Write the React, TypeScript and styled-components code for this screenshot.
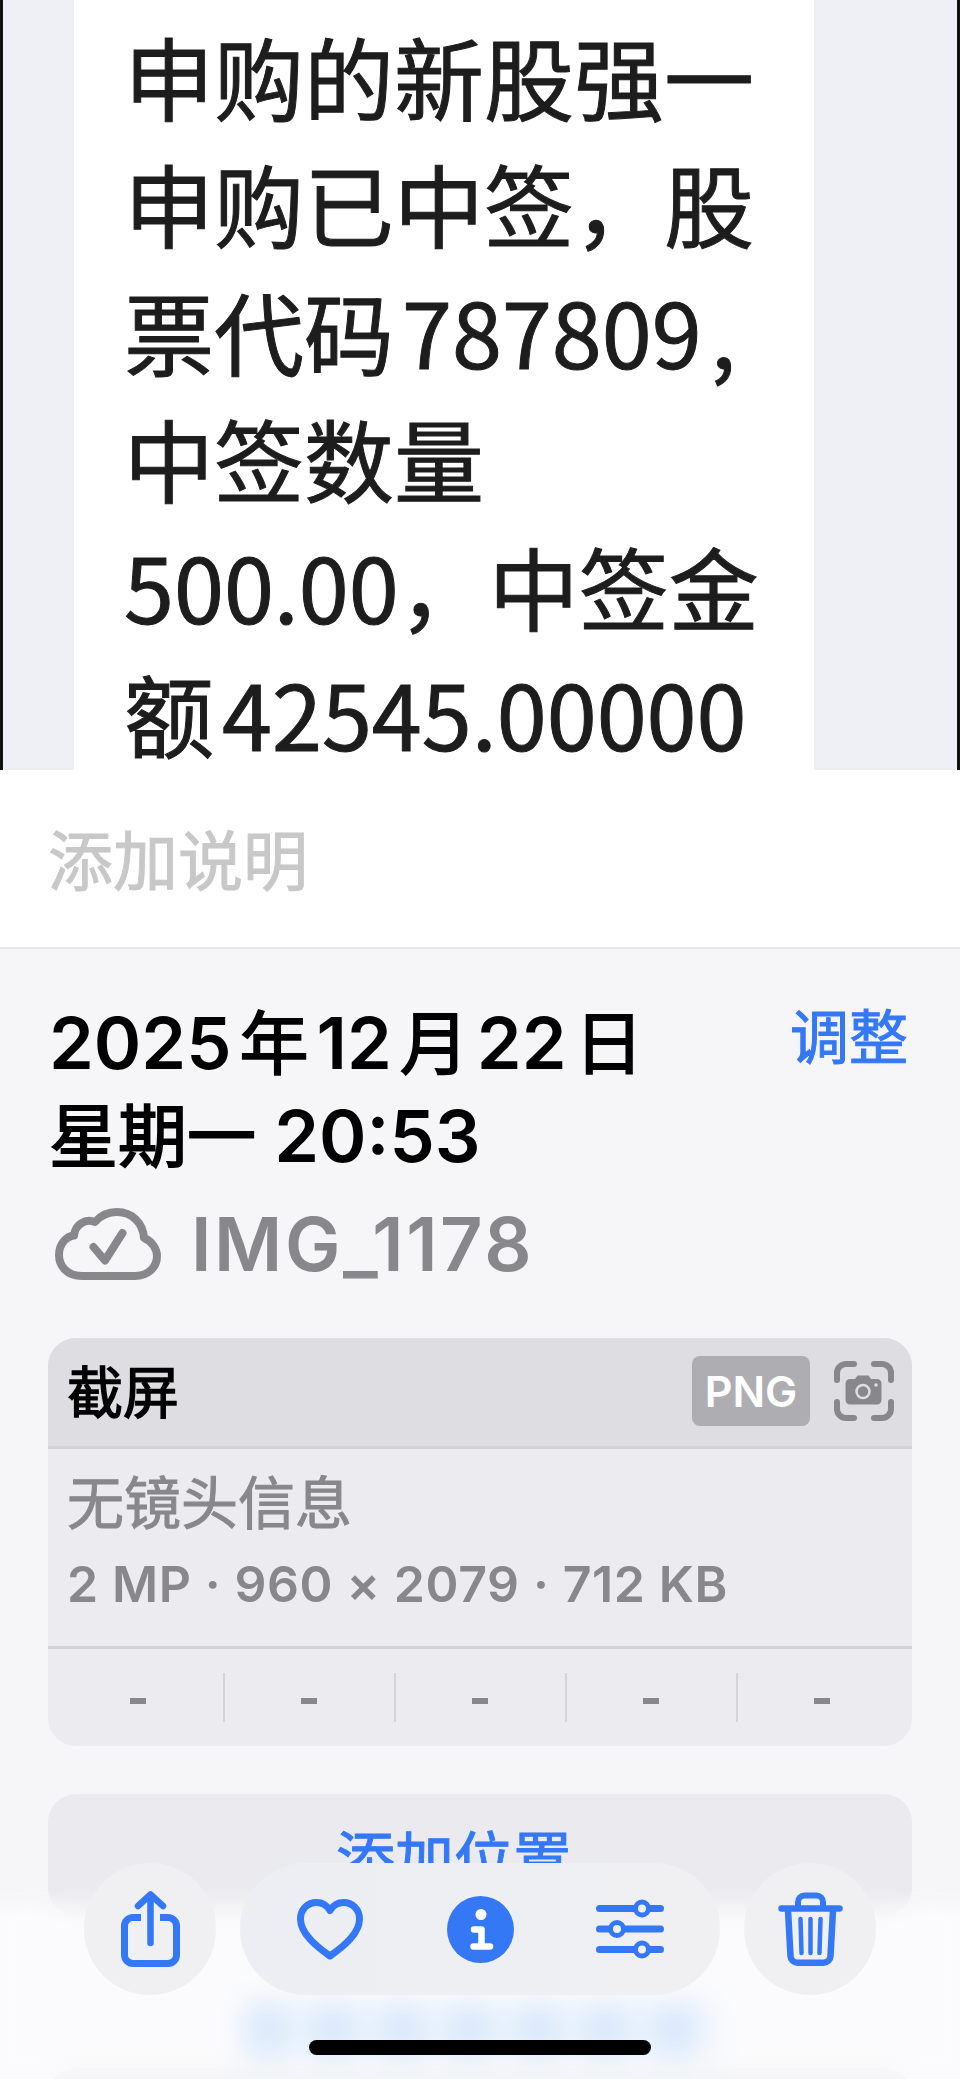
import * as React from 'react';
import styled, { createGlobalStyle } from 'styled-components';

const BLUE = '#3478f6';
const GRAY = '#88888c';
const SANS = '"Inter", "Noto Sans CJK SC", sans-serif';

const GlobalStyle = createGlobalStyle`
  html, body {
    margin: 0;
    padding: 0;
    background: #fff;
  }
  * { box-sizing: border-box; }
`;

const Page = styled.div`
  position: relative;
  width: 960px;
  height: 2079px;
  overflow: hidden;
  font-family: ${SANS};
  background: #f6f6f9;
`;

const Photo = styled.section`
  height: 770px;
  overflow: hidden;
  background: #eff0f5;
  border-left: 3px solid #111;
  border-right: 3px solid #111;
  padding: 0 143px 0 71px;
`;

const PhotoPaper = styled.div`
  height: 100%;
  background: #fff;
  padding: 12px 0 0 50px;
`;

const PhotoText = styled.p`
  margin: 0;
  font-family: "Noto Sans CJK SC", sans-serif;
  font-size: 90px;
  line-height: 127.4px;
  color: #1d1d1d;
  -webkit-text-stroke: 1px #1d1d1d;
  white-space: nowrap;
`;

/* the small space iOS leaves between Chinese and latin text */
const AutoSpace = styled.span<{ $width: number }>`
  display: inline-block;
  width: ${props => props.$width}px;
`;

const Caption = styled.div`
  height: 179px;
  background: #fff;
  border-bottom: 2px solid #e8e8ea;
  padding: 60px 0 0 48px;
  font-size: 65px;
  line-height: 64px;
  -webkit-text-stroke: 1px #c8c8c8;
  color: #c8c8c8;
`;

const Details = styled.div`
  padding: 50px 48px 0;
`;

const DateRow = styled.div`
  display: flex;
  justify-content: space-between;
  align-items: flex-start;
  height: 182px;
`;

const DateText = styled.div`
  margin-top: -2px;
  padding-left: 1px;
  font-size: 72px;
  line-height: 91px;
  font-weight: 600;
  color: #000;
  white-space: nowrap;
`;

const DateCjk = styled.span`
  font-size: 69px;
  font-weight: 400;
  -webkit-text-stroke: 1.8px #000;
`;

const AdjustLink = styled.div`
  font-size: 59px;
  line-height: 66px;
  -webkit-text-stroke: 1px ${BLUE};
  color: ${BLUE};
  margin: 6px 4px 0 0;
`;

const FileRow = styled.div`
  display: flex;
  align-items: center;
  gap: 30px;
  height: 72px;
  margin: 27px 0 0 7px;
`;

const FileName = styled.div`
  font-size: 74px;
  font-weight: 600;
  line-height: 72px;
  letter-spacing: 2.6px;
  color: ${GRAY};
`;

const InfoCard = styled.div`
  height: 408px;
  margin-top: 58px;
  border-radius: 28px;
  overflow: hidden;
  background: #ecebf0;
`;

const CardHeader = styled.div`
  height: 111px;
  display: flex;
  align-items: center;
  padding: 0 18px 3px 19px;
  background: #dddde2;
  border-bottom: 3px solid #d2d2d8;
`;

const CardTitle = styled.div`
  flex: 1;
  margin-top: -5px;
  font-size: 56px;
  -webkit-text-stroke: 1.4px #000;
  color: #000;
`;

const FormatBadge = styled.div`
  width: 118px;
  height: 70px;
  display: flex;
  align-items: center;
  justify-content: center;
  margin-right: 24px;
  border-radius: 8px;
  background: #aeaeb2;
  color: #fff;
  font-size: 43px;
  font-weight: 600;
`;

const CardBody = styled.div`
  height: 200px;
  padding: 22px 19px 0;
  border-bottom: 3px solid #d2d2d8;
`;

const LensName = styled.div`
  font-size: 57px;
  line-height: 66px;
  -webkit-text-stroke: 1px ${GRAY};
  color: ${GRAY};
`;

const ImageMeta = styled.div`
  margin-top: 17px;
  font-size: 50px;
  line-height: 60px;
  font-weight: 600;
  letter-spacing: 0.6px;
  color: ${GRAY};
  white-space: nowrap;
`;

const ExifRow = styled.div`
  height: 97px;
  display: grid;
  grid-template-columns: repeat(5, 171px);
  padding: 24px 4.5px;
`;

const ExifCell = styled.div<{ $divided: boolean }>`
  display: flex;
  align-items: center;
  justify-content: center;
  box-shadow: ${props => (props.$divided ? 'inset -1px 0 0 #d4d4d9, 1px 0 0 #d4d4d9' : 'none')};
`;

const ExifDash = styled.div`
  width: 16px;
  height: 6px;
  margin-top: 7px;
  background: ${GRAY};
`;

const LocationCard = styled.div`
  height: 122px;
  margin-top: 48px;
  padding: 36px 52px 0 0;
  border-radius: 28px;
  background: #ebebef;
  text-align: center;
  font-size: 59px;
  line-height: 60px;
  -webkit-text-stroke: 1px ${BLUE};
  color: ${BLUE};
`;

/* what shows through the bar's blur under the location card */
const BlurredLink = styled.div`
  width: 470px;
  height: 54px;
  margin: 87px auto 0;
  filter: blur(10px);
  background: repeating-linear-gradient(90deg, #a4c8f7 0 42px, #d6e5fa 42px 68px);
`;

const NextCard = styled.div`
  height: 120px;
  margin-top: 11px;
  border-radius: 28px 28px 0 0;
  background: #e4e4e8;
`;

const BarShade = styled.div`
  position: absolute;
  left: 0;
  right: 0;
  bottom: 0;
  height: 192px;
  background: rgba(255, 255, 255, 0.58);
  backdrop-filter: blur(11px);
  mask-image: linear-gradient(to bottom, transparent 0, #000 34px);
`;

const Toolbar = styled.nav`
  position: absolute;
  left: 84px;
  right: 84px;
  bottom: 84px;
  display: flex;
  justify-content: space-between;
`;

const RoundButton = styled.div`
  width: 132px;
  height: 132px;
  display: flex;
  align-items: center;
  justify-content: center;
  border-radius: 50%;
  background: #f0f0f2;
`;

const ToolPill = styled.div`
  width: 480px;
  height: 132px;
  display: grid;
  grid-template-columns: repeat(3, 150px);
  justify-items: center;
  align-items: center;
  padding: 0 15px;
  border-radius: 66px;
  background: linear-gradient(90deg, #eceef3, #f0f0f2);
`;

const HomeIndicator = styled.div`
  position: absolute;
  left: 309px;
  bottom: 24px;
  width: 342px;
  height: 15px;
  border-radius: 8px;
  background: #000;
`;

const CloudIcon = () => (
  <svg width="106" height="72" viewBox="0 0 106 72" fill="none" stroke={GRAY} strokeWidth="8" strokeLinecap="round" strokeLinejoin="round">
    <path d="M27 68C12 68 4 58 4 47C4 36 11 28.500 19 27.500C20 17 30 10 40 14C46 7 54 4 62 4C77 4 88 15 89 30C97 33 102 41 102 48C102 60 92 68 80 68Z" />
    <path d="M38.500 39L50 52.500L67.500 25" />
  </svg>
);

const CameraScanIcon = () => (
  <svg width="60" height="60" viewBox="0 0 60 60" fill="none">
    <g stroke={GRAY} strokeWidth="6" strokeLinecap="round">
      <path d="M3 19V12a9 9 0 0 1 9-9h8" />
      <path d="M40 3h8a9 9 0 0 1 9 9v7" />
      <path d="M57 41v7a9 9 0 0 1-9 9h-8" />
      <path d="M20 57h-8a9 9 0 0 1-9-9v-7" />
    </g>
    <path fill={GRAY} d="M16 18h5l2.500-3.500h11L37 18h6a4.500 4.500 0 0 1 4.500 4.500v16.500a4.500 4.500 0 0 1-4.500 4.500H16a4.500 4.500 0 0 1-4.500-4.500V22.500A4.500 4.500 0 0 1 16 18z" />
    <circle cx="29" cy="30.500" r="6.500" fill="none" stroke="#dddde2" strokeWidth="2.500" />
    <circle cx="42" cy="24" r="1.800" fill="#dddde2" />
  </svg>
);

const ShareIcon = () => (
  <svg width="59" height="76" viewBox="0 0 59 76" fill="none" stroke={BLUE} strokeWidth="7" strokeLinecap="round" strokeLinejoin="round">
    <path strokeLinecap="butt" d="M20 26.500H12a8.500 8.500 0 0 0-8.500 8.500V64a8.500 8.500 0 0 0 8.500 8.500H47a8.500 8.500 0 0 0 8.500-8.500V35a8.500 8.500 0 0 0-8.500-8.500H39" />
    <path strokeWidth="6.500" d="M29.500 52V5" />
    <path strokeWidth="6.500" d="M17 15L29.500 3.500L42 15" />
  </svg>
);

const HeartIcon = () => (
  <svg width="66" height="61" viewBox="0 0 66 61" fill="none" stroke={BLUE} strokeWidth="7" strokeLinejoin="round">
    <path d="M33 57C20 48 3.500 35 3.500 20C3.500 10 11 3.500 19.500 3.500C25.500 3.500 30 6.500 33 11.500C36 6.500 40.500 3.500 46.500 3.500C55 3.500 62.500 10 62.500 20C62.500 35 46 48 33 57Z" />
  </svg>
);

const InfoIcon = () => (
  <svg width="67" height="67" viewBox="0 0 67 67">
    <circle cx="33.500" cy="33.500" r="33.500" fill={BLUE} />
    <ellipse cx="34" cy="18.500" rx="5.500" ry="5.500" fill="#fff" />
    <path d="M27 33.500H34.500V50.500M26.500 50.500H43" fill="none" stroke="#fff" strokeWidth="6.500" strokeLinecap="round" strokeLinejoin="round" />
  </svg>
);

const SlidersIcon = () => (
  <svg width="68" height="60" viewBox="0 0 68 60">
    <g stroke={BLUE} strokeWidth="7" strokeLinecap="round">
      <path d="M3.500 9.500H64.500" />
      <path d="M3.500 30H64.500" />
      <path d="M3.500 50.500H64.500" />
    </g>
    <g fill="#eff0f3" stroke={BLUE} strokeWidth="5">
      <circle cx="46" cy="9.500" r="6.500" />
      <circle cx="21" cy="30" r="6.500" />
      <circle cx="46" cy="50.500" r="6.500" />
    </g>
  </svg>
);

const TrashIcon = () => (
  <svg width="65" height="74" viewBox="0 0 65 74" fill="none" stroke={BLUE} strokeLinecap="round" strokeLinejoin="round">
    <path strokeWidth="6.500" d="M3.500 16.500H61.500" />
    <path strokeWidth="6" d="M20 15V10a6.500 6.500 0 0 1 6.500-6.500h12a6.500 6.500 0 0 1 6.500 6.500V15" />
    <path strokeWidth="6.500" d="M10 18L12.500 64a7 7 0 0 0 7 6.700H45.500a7 7 0 0 0 7-6.700L55 18" />
    <path strokeWidth="4.500" d="M22.500 27L23.500 61M32.500 27V61M42.500 27L41.500 61" />
  </svg>
);

const App = () => (
  <Page>
    <GlobalStyle />
    <Photo>
      <PhotoPaper>
        <PhotoText>
          申购的新股强一<br />
          申购已中签，股<br />
          票代码<AutoSpace $width={8} />787809<AutoSpace $width={9} />,<br />
          中签数量<br />
          500.00，中签金<br />
          额<AutoSpace $width={8} />42545.00000
        </PhotoText>
      </PhotoPaper>
    </Photo>
    <Caption>添加说明</Caption>
    <Details>
      <DateRow>
        <DateText>
          2025<AutoSpace $width={8} /><DateCjk>年</DateCjk><AutoSpace $width={8} />12<AutoSpace $width={8} /><DateCjk>月</DateCjk><AutoSpace $width={8} />22<AutoSpace $width={8} /><DateCjk>日</DateCjk><br />
          <DateCjk>星期一</DateCjk> 20:53
        </DateText>
        <AdjustLink>调整</AdjustLink>
      </DateRow>
      <FileRow>
        <CloudIcon />
        <FileName>IMG_1178</FileName>
      </FileRow>
      <InfoCard>
        <CardHeader>
          <CardTitle>截屏</CardTitle>
          <FormatBadge>PNG</FormatBadge>
          <CameraScanIcon />
        </CardHeader>
        <CardBody>
          <LensName>无镜头信息</LensName>
          <ImageMeta>2 MP · 960 × 2079 · 712 KB</ImageMeta>
        </CardBody>
        <ExifRow>
          {[0, 1, 2, 3, 4].map(i => (
            <ExifCell key={i} $divided={i < 4}>
              <ExifDash />
            </ExifCell>
          ))}
        </ExifRow>
      </InfoCard>
      <LocationCard>添加位置</LocationCard>
      <BlurredLink />
      <NextCard />
    </Details>
    <BarShade />
    <Toolbar>
      <RoundButton><ShareIcon /></RoundButton>
      <ToolPill>
        <HeartIcon />
        <InfoIcon />
        <SlidersIcon />
      </ToolPill>
      <RoundButton><TrashIcon /></RoundButton>
    </Toolbar>
    <HomeIndicator />
  </Page>
);

export default App;
